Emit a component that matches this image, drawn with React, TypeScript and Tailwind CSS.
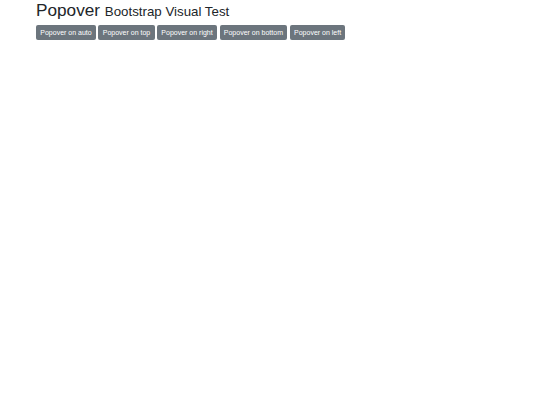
import React from "react";

const labels = [
  "Popover on auto",
  "Popover on top",
  "Popover on right",
  "Popover on bottom",
  "Popover on left",
];

export default function App() {
  return (
    <div
      className="w-[540px] h-[405px] bg-white pl-[36px] text-[#212529]"
      style={{ fontFamily: '"Liberation Sans", Arial, sans-serif' }}
    >
      <h1 className="m-0 h-[20px] text-[17.2px] leading-[20px] font-normal">
        Popover <small className="text-[13.3px] leading-none">Bootstrap Visual Test</small>
      </h1>
      <div className="mt-[4.5px] flex gap-[2.5px]">
        {labels.map((l) => (
          <button
            key={l}
            className="h-[15px] px-[4.3px] rounded-[2px] bg-[#6c757d] text-white text-[7px] leading-[15px] whitespace-nowrap"
          >
            {l}
          </button>
        ))}
      </div>
    </div>
  );
}
